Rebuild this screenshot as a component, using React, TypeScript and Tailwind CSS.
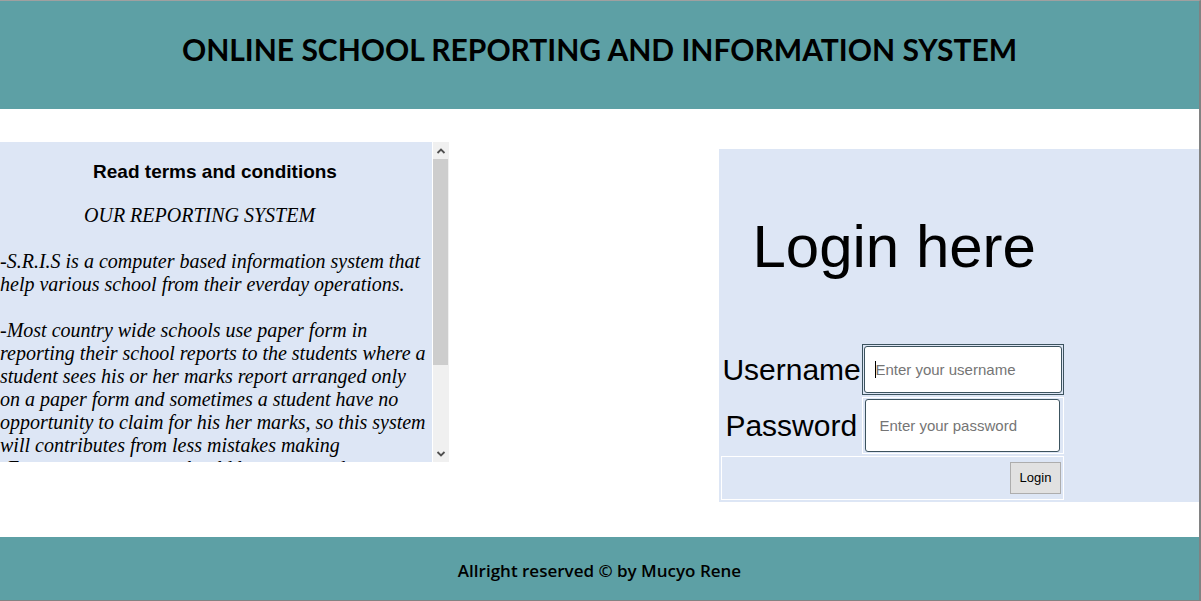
import React from "react";

const Arrow = ({ d }: { d: string }) => (
  <svg viewBox="0 0 16 17" className="h-[17px] w-4" fill="none" stroke="#505050" strokeWidth="1.8" aria-hidden="true">
    <path d={d} />
  </svg>
);

function Terms() {
  return (
    <section className="flex h-80 w-[449px] bg-[#dde6f5]" aria-labelledby="terms-title">
      <div className="min-w-0 flex-1 overflow-hidden pt-[18px] pr-0.5">
        <h2 id="terms-title" className="text-center font-['Liberation_Sans',sans-serif] text-[19px] leading-6 font-bold">
          Read terms and conditions
        </h2>
        <div className="pt-5 font-['Liberation_Serif',serif] text-[20px] leading-[23px] italic">
          <p className="pl-[84px]">OUR REPORTING SYSTEM</p>
          <p className="pt-[23px]">
            -S.R.I.S is a computer based information system that help various school from their everday operations.
          </p>
          <p className="pt-[23px]">
            -Most country wide schools use paper form in reporting their school reports to the students where a student
            sees his or her marks report arranged only on a paper form and sometimes a student have no opportunity to
            claim for his her marks, so this system will contributes from less mistakes making
          </p>
          <p>-Every computer user should be aware and</p>
        </div>
      </div>
      <div className="flex w-[17px] flex-col border-l border-white bg-[#f0f0f0]" aria-hidden="true">
        <Arrow d="M4.5 11 8 7.5l3.5 3.5" />
        <div className="mr-px h-[206px] bg-[#cdcdcd]" />
        <div className="mt-auto">
          <Arrow d="M4.5 7 8 10.5 11.5 7" />
        </div>
      </div>
    </section>
  );
}

function Login() {
  return (
    <section className="mt-[7px] w-2/5 bg-[#dde6f5] font-['Liberation_Sans',sans-serif]">
      <form className="w-[347px] px-0.5 pb-0.5" onSubmit={(e) => e.preventDefault()}>
        <h2 className="pt-16 pl-[31px] text-[60px] leading-[68px]">Login here</h2>
        <div className="grid grid-cols-[139px_1fr] items-center gap-0.5 pt-[63px]">
          <label htmlFor="username" className="pl-px text-[30px] leading-[46px]">
            Username
          </label>
          <div className="relative border border-[#3c535e] p-px">
            <input
              id="username"
              placeholder="Enter your username"
              className="block h-[47px] w-full rounded-[3px] border border-[#3c535e] bg-white px-2.5 text-[15px] text-black outline-none placeholder:text-[#757575]"
            />
            <span className="absolute top-4 left-3 h-[17px] w-px bg-black" aria-hidden="true" />
          </div>
          <label htmlFor="password" className="pl-1 text-[30px] leading-[46px]">
            Password
          </label>
          <div className="border border-white py-px pr-[3px] pl-0.5">
            <input
              id="password"
              type="password"
              placeholder="Enter your password"
              className="block h-[53px] w-full rounded-[3px] border border-[#3c535e] bg-white px-[13px] text-[15px] text-black outline-none placeholder:text-[#757575]"
            />
          </div>
          <div className="col-span-2 flex justify-end border border-white py-[5px] pr-0.5">
            <button type="submit" className="h-8 border border-[#adadad] bg-[#e1e1e1] px-[9px] text-[13px]">
              Login
            </button>
          </div>
        </div>
      </form>
    </section>
  );
}

export default function App() {
  return (
    <div className="flex min-h-screen flex-col border-t border-r-2 border-b border-t-[#a0a0a0] border-r-[#828282] border-b-[#828282] bg-white text-black">
      <header className="bg-[#5da0a5] pt-[26px] pb-[38px] text-center font-['Lato',sans-serif]">
        <h1 className="text-[30px] leading-[44px] font-bold">ONLINE SCHOOL REPORTING AND INFORMATION SYSTEM</h1>
      </header>
      <main className="flex flex-1 items-start justify-between pt-[33px]">
        <Terms />
        <Login />
      </main>
      <footer className="bg-[#5da0a5] pt-[22px] pb-[17px] text-center font-['Open_Sans',sans-serif] text-[17px] leading-6 font-semibold">
        Allright reserved © by Mucyo Rene
      </footer>
    </div>
  );
}
